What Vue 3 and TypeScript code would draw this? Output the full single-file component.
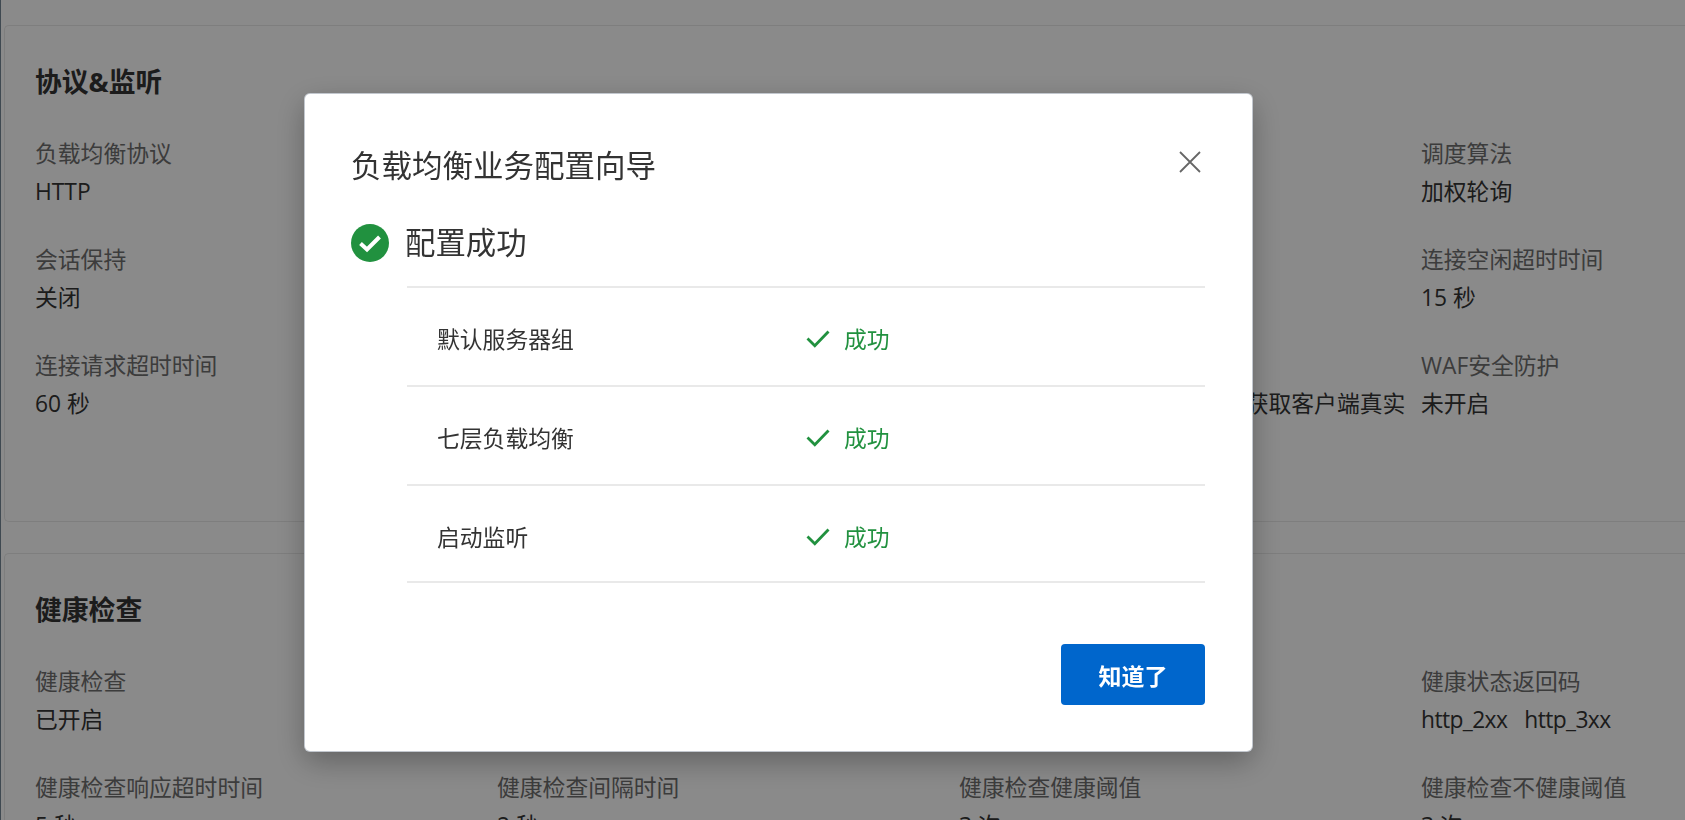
<script setup lang="ts">
interface Field {
  label: string
  value?: string
  codes?: string[]
}

const sections: { title: string; fields: Field[] }[] = [
  {
    title: '协议&监听',
    fields: [
      { label: '负载均衡协议', value: 'HTTP' },
      { label: '监听名称', value: 'listener-http' },
      { label: '监听端口', value: '80' },
      { label: '调度算法', value: '加权轮询' },
      { label: '会话保持', value: '关闭' },
      { label: '访问控制', value: '未开启' },
      { label: 'Gzip数据压缩', value: '已开启' },
      { label: '连接空闲超时时间', value: '15 秒' },
      { label: '连接请求超时时间', value: '60 秒' },
      { label: '连接响应超时时间', value: '60 秒' },
      { label: '附加HTTP头部字段', value: '可通过 X-Forwarded-For\u00a0\u00a0头获取客户端真实' },
      { label: 'WAF安全防护', value: '未开启' },
    ],
  },
  {
    title: '健康检查',
    fields: [
      { label: '健康检查', value: '已开启' },
      { label: '健康检查方式', value: 'HTTP' },
      { label: '健康检查路径', value: '/' },
      { label: '健康状态返回码', codes: ['http_2xx', 'http_3xx'] },
      { label: '健康检查响应超时时间', value: '5 秒' },
      { label: '健康检查间隔时间', value: '2 秒' },
      { label: '健康检查健康阈值', value: '3 次' },
      { label: '健康检查不健康阈值', value: '3 次' },
    ],
  },
]

const steps = ['默认服务器组', '七层负载均衡', '启动监听']
</script>

<template>
  <div class="page">
    <section v-for="section in sections" :key="section.title" class="card">
      <h2 class="card-title">{{ section.title }}</h2>
      <div class="fields">
        <div v-for="field in section.fields" :key="field.label" class="field">
          <div class="field-label">{{ field.label }}</div>
          <div v-if="field.codes" class="field-value codes">
            <span v-for="code in field.codes" :key="code">{{ code }}</span>
          </div>
          <div v-else class="field-value">{{ field.value }}</div>
        </div>
      </div>
    </section>
  </div>

  <div class="overlay">
    <div class="dialog">
      <div class="dialog-head">
        <span class="dialog-title">负载均衡业务配置向导</span>
        <svg class="close" viewBox="0 0 22 22" width="22" height="22">
          <path d="M1 1 L21 21 M21 1 L1 21" stroke="#666" stroke-width="1.8" fill="none" />
        </svg>
      </div>
      <div class="result">
        <svg class="result-icon" viewBox="0 0 38 38" width="38" height="38">
          <circle cx="19" cy="19" r="19" fill="#21913f" />
          <path d="M9.5 19.5 L16 25.5 L28.5 13" stroke="#fff" stroke-width="4" fill="none" />
        </svg>
        <span class="result-text">配置成功</span>
      </div>
      <ul class="steps">
        <li v-for="step in steps" :key="step" class="step">
          <span class="step-name">{{ step }}</span>
          <span class="step-status">
            <svg viewBox="0 0 24 18" width="24" height="18">
              <path d="M1.5 8.5 L8.8 15.8 L22.5 1.5" stroke="#21913f" stroke-width="2.8" fill="none" />
            </svg>
            成功
          </span>
        </li>
      </ul>
      <div class="dialog-foot">
        <button class="primary" type="button">知道了</button>
      </div>
    </div>
  </div>
</template>

<style>
html,
body {
  height: 100%;
  overflow: hidden;
  background: #fbfbfb;
}
</style>

<style scoped>
.page {
  height: 820px;
  overflow: hidden;
  box-sizing: border-box;
  padding: 25px 0 0 3px;
  border-left: 1px solid #748694;
  font-family: "Open Sans", "Noto Sans CJK SC", sans-serif;
}

.card {
  box-sizing: border-box;
  height: 497px;
  margin-bottom: 31px;
  padding: 37px 0 0 30px;
  border: 1px solid #e6e6e6;
  border-right: 0;
  border-radius: 5px 0 0 5px;
}

.card-title {
  margin: 0;
  font-size: 26.8px;
  line-height: 38px;
  font-weight: 700;
  color: #333;
}

.fields {
  display: grid;
  grid-template-columns: repeat(4, 462px);
  grid-auto-rows: 106px;
  margin-top: 34px;
}

.field {
  min-width: 0;
}

.field-label,
.field-value {
  font-size: 22.8px;
  line-height: 37px;
  white-space: nowrap;
}

.field-label {
  color: #6d6d6d;
}

.field-value {
  margin-top: 1px;
  color: #333;
}

.codes {
  display: flex;
  gap: 17px;
  letter-spacing: -0.6px;
}

.overlay {
  position: fixed;
  inset: 0;
  padding: 94px 0 0 305px;
  background: rgba(0, 0, 0, 0.45);
  font-family: "Open Sans", "Noto Sans CJK SC", sans-serif;
}

.dialog {
  box-sizing: border-box;
  width: 947px;
  height: 657px;
  padding: 0 47px 0 46px;
  background: #fff;
  border-radius: 5px;
  box-shadow: 0 0 0 1px #c2c7ce, 0 10px 30px rgba(0, 0, 0, 0.3);
}

.dialog-head {
  display: flex;
  align-items: center;
  justify-content: space-between;
  height: 140px;
  padding-right: 4px;
}

.dialog-title {
  font-size: 30.5px;
  color: #333;
}

.close {
  margin-top: -4px;
}

.result {
  display: flex;
  align-items: center;
  gap: 16px;
  height: 50px;
  margin-top: -16px;
}

.result-text {
  margin-top: -5px;
  font-size: 30.4px;
  color: #333;
}

.steps {
  margin: 18px 0 0 56px;
  padding: 0;
  list-style: none;
  border-top: 2px solid #e9e9e9;
}

.step {
  display: flex;
  align-items: center;
  box-sizing: border-box;
  height: 99px;
  padding: 4px 0 0 30px;
  border-bottom: 2px solid #e9e9e9;
  font-size: 22.8px;
  color: #333;
}

.step:last-child {
  height: 97px;
  padding-top: 6px;
}

.step-name {
  width: 369px;
}

.step-status {
  display: flex;
  align-items: center;
  gap: 14px;
  color: #21913f;
}

.step-status svg {
  margin-top: 1px;
}

.dialog-foot {
  display: flex;
  justify-content: flex-end;
  margin-top: 61px;
}

.primary {
  width: 144px;
  height: 61px;
  border: 0;
  border-radius: 4px;
  background: #0066cc;
  color: #fff;
  font: 700 23px "Open Sans", "Noto Sans CJK SC", sans-serif;
}
</style>
